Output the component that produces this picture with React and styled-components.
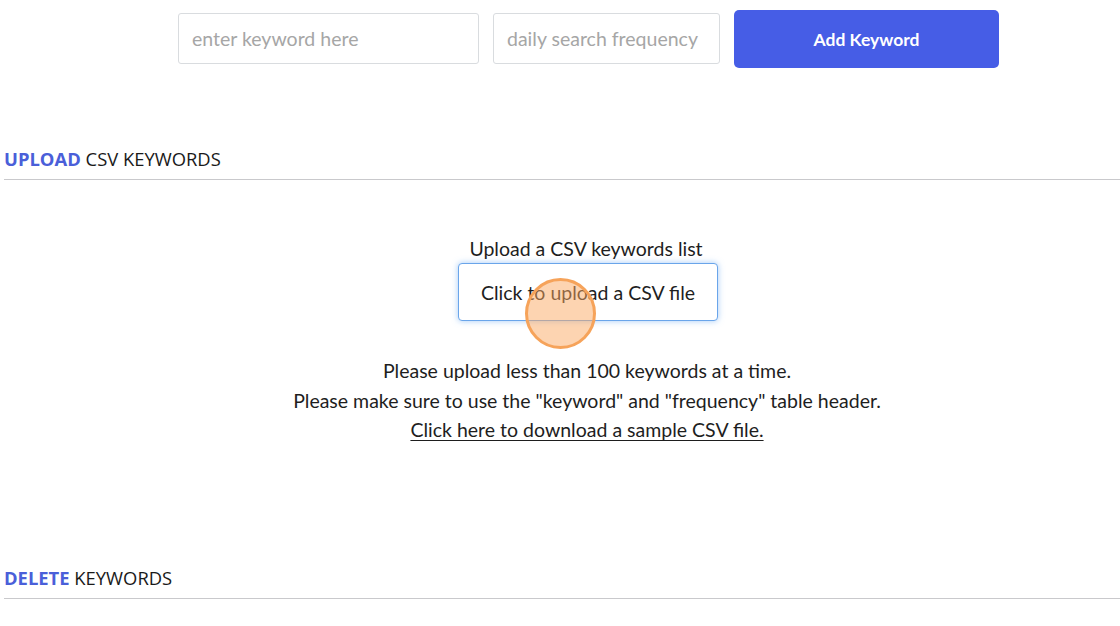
import styled, { createGlobalStyle } from "styled-components";

const GlobalStyle = createGlobalStyle`
    html, body {
        margin: 0;
        padding: 0;
        background: #ffffff;
        overflow: hidden;
    }
    body {
        font-family: "Open Sans", "Noto Sans", sans-serif;
        color: #1e1e1e;
    }
`;

const Page = styled.div`
    width: 1120px;
    height: 626px;
    position: relative;
    overflow: hidden;
`;

const KeywordForm = styled.form`
    display: flex;
    align-items: center;
    padding: 10px 0 0 178px;
    gap: 14px;
`;

const TextInput = styled.input`
    box-sizing: border-box;
    width: ${(p) => p.$width}px;
    height: 51px;
    margin-top: 3px;
    margin-bottom: 4px;
    border: 1.5px solid #d9dcdf;
    border-radius: 3px;
    padding: 0 13px;
    font-family: "Lato", sans-serif;
    font-size: 19.5px;
    color: #333;
    outline: none;
    &::placeholder {
        color: #a6a6a6;
    }
`;

const AddButton = styled.button`
    box-sizing: border-box;
    width: 265px;
    height: 58px;
    border: none;
    border-radius: 5px;
    background: #465de6;
    color: #ffffff;
    font-family: "Lato", sans-serif;
    font-weight: 700;
    font-size: 17.5px;
`;

const Section = styled.section`
    margin: 0 0 0 4px;
`;

const SectionTitle = styled.h2`
    margin: ${(p) => p.$top}px 0 0;
    padding-bottom: 8px;
    border-bottom: 1.5px solid #c9c9cc;
    font-family: "Open Sans", sans-serif;
    font-weight: 400;
    font-size: 18.4px;
    line-height: 25px;
    color: #1a1a1a;
`;

const Accent = styled.span`
    color: #4a5fd9;
    font-weight: 700;
`;

const UploadArea = styled.div`
    display: flex;
    flex-direction: column;
    align-items: center;
    padding: 57px 0 0 48px;
    font-family: "Lato", sans-serif;
    font-size: 19.5px;
    color: #1e1e1e;
`;

const UploadLabel = styled.div`
    line-height: 24px;
    margin-bottom: 2px;
`;

const UploadButton = styled.label`
    position: relative;
    box-sizing: border-box;
    width: 260px;
    height: 58px;
    margin-left: 4px;
    display: flex;
    align-items: center;
    justify-content: center;
    border: 1.5px solid #6aa5ea;
    border-radius: 4px;
    box-shadow: 0 0 6px rgba(90, 160, 240, 0.55);
    background: #fff;
`;

const ClickMarker = styled.span`
    position: absolute;
    left: 66px;
    top: 14px;
    width: 71px;
    height: 71px;
    box-sizing: border-box;
    border-radius: 50%;
    border: 3px solid #f6a35a;
    background: rgba(252, 170, 100, 0.5);
    pointer-events: none;
`;

const Notes = styled.div`
    margin-top: 35px;
    margin-left: 2px;
    text-align: center;
    line-height: 29.5px;
`;

const SampleLink = styled.a`
    color: #1e1e1e;
    text-decoration: underline;
    text-underline-offset: 3px;
`;

export default function App() {
    return (
        <Page>
            <GlobalStyle />
            <KeywordForm>
                <TextInput $width={301} placeholder="enter keyword here" />
                <TextInput $width={227} placeholder="daily search frequency" />
                <AddButton type="button">Add Keyword</AddButton>
            </KeywordForm>

            <Section>
                <SectionTitle $top={78}>
                    <Accent>UPLOAD</Accent> CSV KEYWORDS
                </SectionTitle>
                <UploadArea>
                    <UploadLabel>Upload a CSV keywords list</UploadLabel>
                    <UploadButton>
                        Click to upload a CSV file
                        <ClickMarker />
                    </UploadButton>
                    <Notes>
                        Please upload less than 100 keywords at a time.
                        <br />
                        Please make sure to use the "keyword" and "frequency" table header.
                        <br />
                        <SampleLink href="#">Click here to download a sample CSV file.</SampleLink>
                    </Notes>
                </UploadArea>
            </Section>

            <Section>
                <SectionTitle $top={120}>
                    <Accent>DELETE</Accent> KEYWORDS
                </SectionTitle>
            </Section>
        </Page>
    );
}
